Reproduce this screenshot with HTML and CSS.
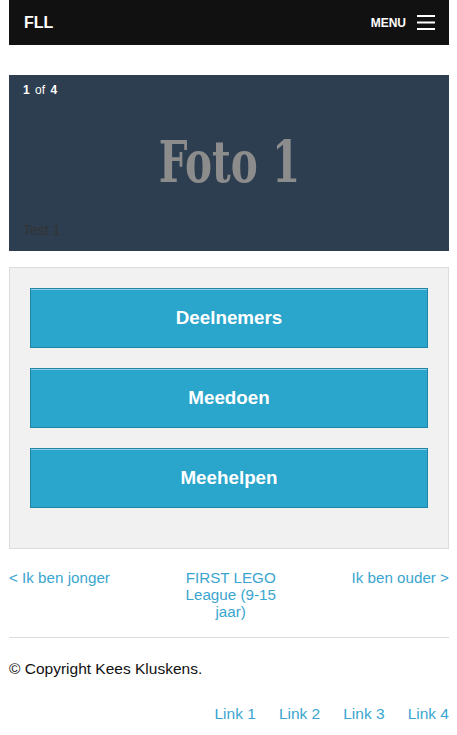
FILE: index.html
```html
<!DOCTYPE html>
<html>
<head>
<meta charset="utf-8">
<link rel="stylesheet" href="styles.css">
</head>
<body>
<div class="page">
  <header class="topbar">
    <span class="brand">FLL</span>
    <span class="menu">MENU
      <svg class="burger" width="18" height="15" viewBox="0 0 18 15"><rect x="0" y="0" width="18" height="2" fill="#fff"/><rect x="0" y="6.5" width="18" height="2" fill="#fff"/><rect x="0" y="13" width="18" height="2" fill="#fff"/></svg>
    </span>
  </header>

  <section class="slider">
    <div class="counter"><b>1</b> of <b>4</b></div>
    <div class="slide-title">Foto 1</div>
    <div class="caption">Test 1</div>
  </section>

  <section class="box">
    <a class="btn">Deelnemers</a>
    <a class="btn">Meedoen</a>
    <a class="btn">Meehelpen</a>
  </section>

  <nav class="pager">
    <a class="prev">&lt; Ik ben jonger</a>
    <a class="current">FIRST LEGO League (9-15 jaar)</a>
    <a class="next">Ik ben ouder &gt;</a>
  </nav>

  <hr class="rule">

  <p class="copy">© Copyright Kees Kluskens.</p>

  <div class="links">
    <a>Link 1</a><a>Link 2</a><a>Link 3</a><a>Link 4</a>
  </div>
</div>
</body>
</html>
```
FILE: styles.css
```css
* { box-sizing: border-box; }
html, body { margin: 0; padding: 0; background: #fff; }
body { font-family: "Liberation Sans", Arial, sans-serif; color: #111; }
.page { margin: 0 8px 0 9px; width: 440px; }

.topbar {
  height: 45px;
  background: #111;
  display: flex;
  align-items: center;
  justify-content: space-between;
  padding: 0 14px 0 15px;
  color: #fff;
}
.brand { font-weight: bold; font-size: 16px; }
.menu { font-weight: bold; font-size: 12px; display: flex; align-items: center; gap: 11px; }
.burger { display: block; }

.slider {
  margin-top: 30px;
  height: 176px;
  background: #2d3e50;
  position: relative;
  display: flex;
  align-items: center;
  justify-content: center;
}
.counter { position: absolute; left: 14px; top: 8px; color: #fff; font-size: 12px; word-spacing: 2px; }
.counter b { font-weight: bold; }
.slide-title {
  font-family: "DejaVu Serif Condensed", "DejaVu Serif", serif;
  font-weight: bold;
  font-size: 57px;
  color: #8c8c8c;
  margin-top: -4px;
  transform: scaleX(0.79);
}
.caption { position: absolute; left: 14px; bottom: 13px; color: #333; font-size: 14px; }

.box {
  margin-top: 16px;
  background: #f1f1f1;
  border: 1px solid #dcdcdc;
  padding: 20px 20px 40px;
  display: flex;
  flex-direction: column;
  gap: 20px;
}
.btn {
  height: 60px;
  background: #2aa5cb;
  border: 1px solid #2186a6;
  box-shadow: inset 0 1px 0 #8fd0e6;
  color: #fff;
  font-weight: bold;
  font-size: 18.8px;
  display: flex;
  align-items: center;
  justify-content: center;
}

.pager {
  margin-top: 20px;
  display: flex;
  justify-content: space-between;
  align-items: flex-start;
  font-size: 15.2px;
  line-height: 17px;
  color: #3aa5d0;
}
.pager a { color: #3aa5d0; }
.current { width: 98px; text-align: center; }
.next { text-align: right; }

.rule { margin: 17px 0 0; border: 0; border-top: 1px solid #dcdcdc; height: 0; }

.copy { margin: 22px 0 0; font-size: 15.5px; line-height: 17px; color: #111; }

.links { margin-top: 28px; display: flex; justify-content: flex-end; gap: 23px; font-size: 15.5px; line-height: 17px; }
.links a { color: #3aa5d0; }
```
